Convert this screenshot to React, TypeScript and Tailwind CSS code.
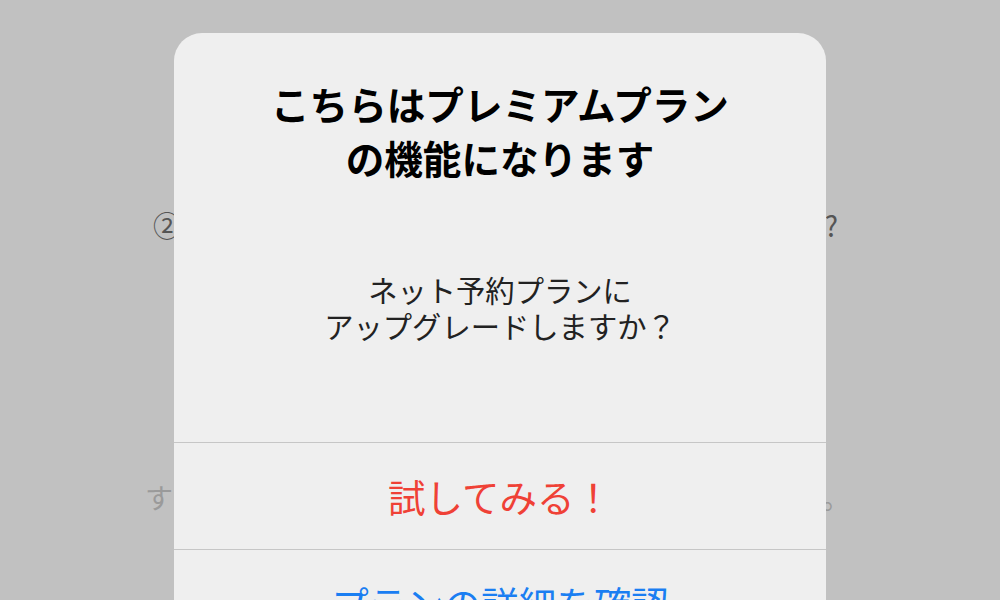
import React from "react";

export default function App() {
  return (
    <div
      className="relative w-[1000px] h-[600px] overflow-hidden bg-[#c1c1c1]"
      style={{ fontFamily: '"Noto Sans CJK JP", "Noto Sans", sans-serif' }}
    >
      {/* background page content */}
      <div className="flex flex-col">
        <div className="h-[204px]" />
        <div className="flex justify-between items-center h-[42px] pl-[153px] pr-[162px] text-[28px] text-[#555555]">
          <span>②</span>
          <span>?</span>
        </div>
        <div className="h-[230px]" />
        <div className="flex justify-between items-center h-[42px] pl-[145px] pr-[150px] text-[28px] text-[#9a9a9a]">
          <span>す</span>
          <span>。</span>
        </div>
      </div>

      {/* modal */}
      <div className="absolute left-[174px] top-[33px] w-[652px] h-[640px] rounded-[28px] bg-[#efefef] flex flex-col">
        <p className="pt-[43px] text-center font-bold text-[38.6px] leading-[54px] text-black">
          こちらはプレミアムプラン
          <br />
          の機能になります
        </p>
        <p className="mt-[87px] text-center text-[29.3px] leading-[36px] text-[#222222]">
          ネット予約プランに
          <br />
          アップグレードしますか？
        </p>
        <div className="mt-[99px] border-t border-[#c6c6c6] h-[107px] flex items-center justify-center text-[37.5px] text-[#ef4136]">
          試してみる！
        </div>
        <div className="border-t border-[#c6c6c6] h-[107px] flex items-center justify-center text-[37.5px] text-[#1a7ef2]">
          プランの詳細を確認
        </div>
      </div>
    </div>
  );
}
